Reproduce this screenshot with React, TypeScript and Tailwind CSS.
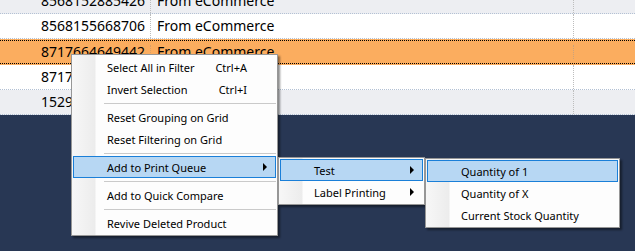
import React from "react";

type Row = { code: string; source: string; tone: "gray" | "white" | "selected" };

const rows: Row[] = [
  { code: "8568152885426", source: "From eCommerce", tone: "gray" },
  { code: "8568155668706", source: "From eCommerce", tone: "white" },
  { code: "8717664649442", source: "From eCommerce", tone: "selected" },
  { code: "8717664649459", source: "", tone: "white" },
  { code: "1529710000012", source: "", tone: "gray" },
];

type Entry =
  | { kind: "item"; label: string; shortcut?: string; sub?: boolean; active?: boolean }
  | { kind: "sep" };

const mainMenu: Entry[] = [
  { kind: "item", label: "Select All in Filter", shortcut: "Ctrl+A" },
  { kind: "item", label: "Invert Selection", shortcut: "Ctrl+I" },
  { kind: "sep" },
  { kind: "item", label: "Reset Grouping on Grid" },
  { kind: "item", label: "Reset Filtering on Grid" },
  { kind: "sep" },
  { kind: "item", label: "Add to Print Queue", sub: true, active: true },
  { kind: "sep" },
  { kind: "item", label: "Add to Quick Compare" },
  { kind: "sep" },
  { kind: "item", label: "Revive Deleted Product" },
];

const printMenu: Entry[] = [
  { kind: "item", label: "Test", sub: true, active: true },
  { kind: "item", label: "Label Printing", sub: true },
];

const testMenu: Entry[] = [
  { kind: "item", label: "Quantity of 1", active: true },
  { kind: "item", label: "Quantity of X" },
  { kind: "item", label: "Current Stock Quantity" },
];

const GridRow = ({ row }: { row: Row }) => {
  if (row.tone === "selected") {
    return (
      <div className="h-[26px] bg-[#fbad5f] pt-[1px]">
        <div className="flex h-[24px] items-center border-y border-dotted border-black">
          <div className="w-[151px] border-r border-dotted border-[#d8a06a] pr-[5px] text-right">{row.code}</div>
          <div className="w-[423px] border-r border-dotted border-[#c9a27c] pl-[6px]">{row.source}</div>
          <div className="flex-1" />
        </div>
      </div>
    );
  }
  const bg = row.tone === "gray" ? "bg-[#edeef2]" : "bg-white";
  return (
    <div className={`flex h-[25px] items-center border-b border-dotted border-[#b3c1d4] ${bg}`}>
      <div className="flex h-full w-[151px] items-center justify-end border-r border-dotted border-[#bdbdbd] pr-[5px]">
        {row.code}
      </div>
      <div className="flex h-full w-[423px] items-center border-r border-dotted border-[#bdbdbd] pl-[6px]">
        {row.source}
      </div>
      <div className="flex-1" />
    </div>
  );
};

const Arrow = () => (
  <span className="ml-auto h-0 w-0 border-y-[4px] border-l-[4px] border-y-transparent border-l-black" />
);

const Menu = ({ entries, className }: { entries: Entry[]; className: string }) => (
  <div
    className={`absolute border border-[#979797] bg-[linear-gradient(to_right,#f7f7f7_0px,#ececec_23px,#fdfdfd_24px,#fdfdfd_100%)] p-[1px] shadow-[2px_2px_2px_rgba(0,0,0,0.45)] ${className}`}
  >
    {entries.map((e, i) =>
      e.kind === "sep" ? (
        <div key={i} className="flex h-[6px] items-center pl-[31px]">
          <div className="h-[1px] w-full bg-[#cacaca]" />
        </div>
      ) : (
        <div
          key={i}
          className={`flex h-[22px] items-center border pl-[33px] pr-[8px] ${
            e.active ? "border-[#1a7fd8] bg-[#b7d7f3]" : "border-transparent"
          }`}
        >
          <span>{e.label}</span>
          {e.shortcut && <span className="ml-auto mr-[20px]">{e.shortcut}</span>}
          {e.sub && <Arrow />}
        </div>
      )
    )}
  </div>
);

export default function App() {
  return (
    <div className="relative h-[251px] w-[635px] overflow-hidden bg-[#283754] font-['Noto_Sans',sans-serif] text-black">
      <div className="-mt-[11px] text-[14px] leading-none">
        {rows.map((r) => (
          <GridRow key={r.code} row={r} />
        ))}
      </div>

      <div className="text-[11px] leading-none">
        <Menu entries={mainMenu} className="left-[71px] top-[54px] w-[207px]" />
        <Menu entries={printMenu} className="left-[278px] top-[157px] w-[147px]" />
        <Menu entries={testMenu} className="left-[425px] top-[158px] w-[195px]" />
      </div>
    </div>
  );
}
